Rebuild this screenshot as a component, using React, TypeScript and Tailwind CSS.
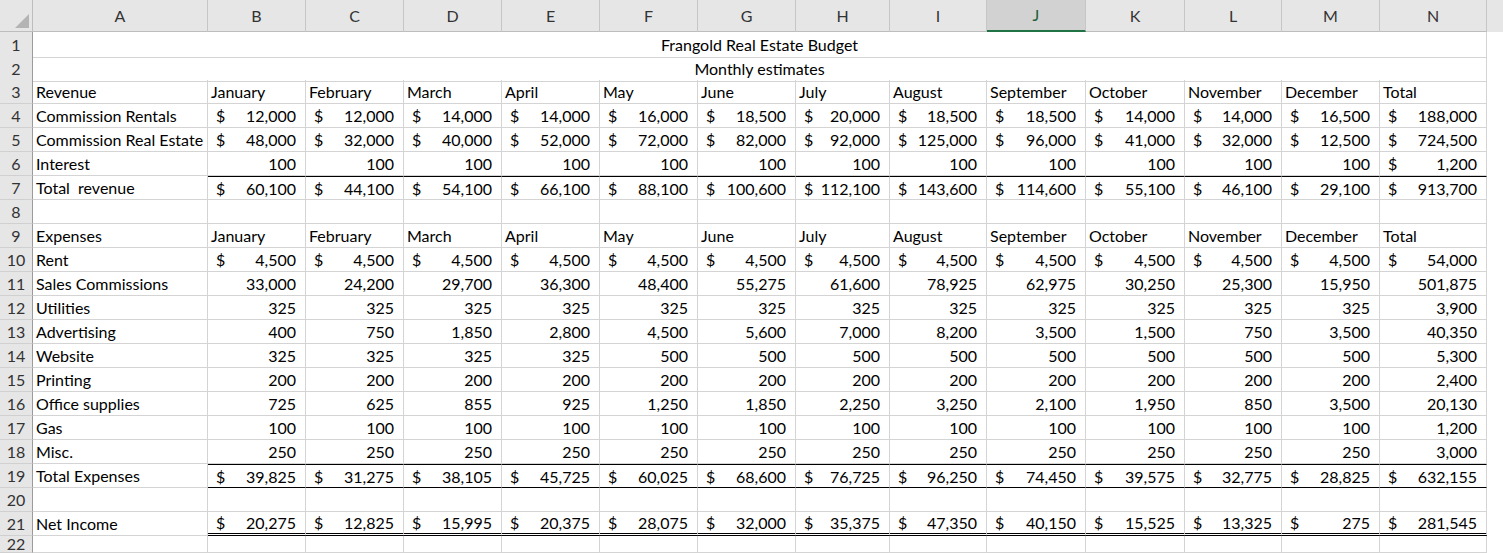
import React from "react";

const COLS = ["A","B","C","D","E","F","G","H","I","J","K","L","M","N"];
const GRID = "grid grid-cols-[33px_175px_98px_98px_98px_98px_98px_98px_94px_97px_99px_99px_97px_98px_107px]";
const f = (n: number) => n.toLocaleString("en-US");
const months = ["January","February","March","April","May","June","July","August","September","October","November","December","Total"];

type Row = { label?: string; vals?: number[]; dollar?: "all" | "last" | "none"; months?: boolean; title?: string; top?: boolean; bottom?: boolean; dbl?: boolean; h?: string };

const rows: Row[] = [
  { title: "Frangold Real Estate Budget" },
  { title: "Monthly estimates" },
  { label: "Revenue", months: true },
  { label: "Commission Rentals", dollar: "all", vals: [12000,12000,14000,14000,16000,18500,20000,18500,18500,14000,14000,16500,188000] },
  { label: "Commission Real Estate", dollar: "all", vals: [48000,32000,40000,52000,72000,82000,92000,125000,96000,41000,32000,12500,724500] },
  { label: "Interest", dollar: "last", vals: [100,100,100,100,100,100,100,100,100,100,100,100,1200] },
  { label: "Total  revenue", dollar: "all", top: true, vals: [60100,44100,54100,66100,88100,100600,112100,143600,114600,55100,46100,29100,913700] },
  {},
  { label: "Expenses", months: true },
  { label: "Rent", dollar: "all", vals: [4500,4500,4500,4500,4500,4500,4500,4500,4500,4500,4500,4500,54000] },
  { label: "Sales Commissions", dollar: "none", vals: [33000,24200,29700,36300,48400,55275,61600,78925,62975,30250,25300,15950,501875] },
  { label: "Utilities", dollar: "none", vals: [325,325,325,325,325,325,325,325,325,325,325,325,3900] },
  { label: "Advertising", dollar: "none", vals: [400,750,1850,2800,4500,5600,7000,8200,3500,1500,750,3500,40350] },
  { label: "Website", dollar: "none", vals: [325,325,325,325,500,500,500,500,500,500,500,500,5300] },
  { label: "Printing", dollar: "none", vals: [200,200,200,200,200,200,200,200,200,200,200,200,2400] },
  { label: "Office supplies", dollar: "none", vals: [725,625,855,925,1250,1850,2250,3250,2100,1950,850,3500,20130] },
  { label: "Gas", dollar: "none", vals: [100,100,100,100,100,100,100,100,100,100,100,100,1200] },
  { label: "Misc.", dollar: "none", vals: [250,250,250,250,250,250,250,250,250,250,250,250,3000] },
  { label: "Total Expenses", dollar: "all", top: true, bottom: true, vals: [39825,31275,38105,45725,60025,68600,76725,96250,74450,39575,32775,28825,632155] },
  {},
  { label: "Net Income", dollar: "all", dbl: true, vals: [20275,12825,15995,20375,28075,32000,35375,47350,40150,15525,13325,275,281545] },
  { h: "h-[17px]" },
];

export default function App() {
  return (
    <div className="w-[1503px] h-[553px] overflow-hidden bg-white text-[16px] text-black" style={{ fontFamily: "Lato, 'Open Sans', sans-serif" }}>
      <div className={GRID + " h-[32px] bg-[#e6e6e6]"}>
        <div className="relative border-r border-b border-[#bdbdbd]">
          <div className="absolute right-[3px] bottom-[3px] w-0 h-0 border-l-[14px] border-l-transparent border-b-[14px] border-b-[#b4b4b4]" />
        </div>
        {COLS.map((c) => (
          <div key={c} className={"flex items-center justify-center border-r border-[#c6c6c6] " + (c === "J" ? "bg-[#d2d2d2] border-b-2 border-b-[#217346] text-[#1e5e38]" : "border-b border-b-[#bdbdbd] text-[#333]")}>{c}</div>
        ))}
      </div>
      {rows.map((r, i) => (
        <div key={i} className={GRID + " " + (r.h ?? "h-[24px]")}>
          <div className="bg-[#e6e6e6] border-r border-r-[#9b9b9b] border-b border-b-[#d0d0d0] flex items-center justify-center text-[#333] leading-none">{i + 1}</div>
          {r.title ? (
            <div className="col-span-14 border-r border-b border-[#d4d4d4] flex items-center justify-center pt-[1px]">{r.title}</div>
          ) : (
            <>
              <div className="border-r border-b border-[#d4d4d4] flex items-center px-[3px] pt-[1px] whitespace-pre overflow-hidden">{r.label}</div>
              {COLS.slice(1).map((c, j) => {
                let cls = "border-r border-b border-[#d4d4d4] flex items-center pt-[1px] whitespace-nowrap overflow-hidden ";
                if (r.top) cls += "border-t border-t-black ";
                if (r.bottom) cls += "border-b-black ";
                if (r.dbl) cls += "border-b-[3px] border-b-black border-double ";
                let content: React.ReactNode = null;
                if (r.months) content = <span className="pl-[3px]">{months[j]}</span>;
                else if (r.vals) {
                  const showD = r.dollar === "all" || (r.dollar === "last" && j === 12);
                  content = (
                    <div className="flex w-full justify-between pl-[8px] pr-[9px]">
                      <span>{showD ? "$" : ""}</span>
                      <span>{f(r.vals[j])}</span>
                    </div>
                  );
                }
                return <div key={c} className={cls}>{content}</div>;
              })}
            </>
          )}
        </div>
      ))}
    </div>
  );
}
